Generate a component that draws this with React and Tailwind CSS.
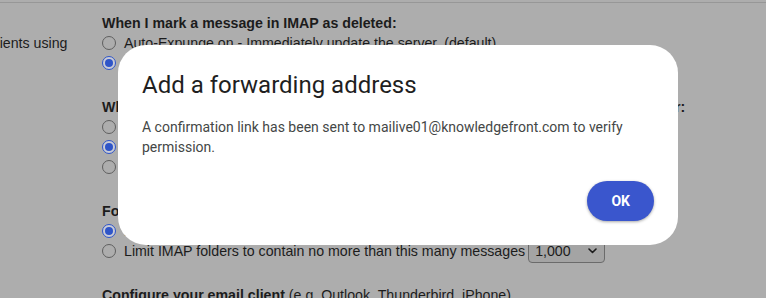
import React from "react";

function Radio({ checked }) {
  if (checked) {
    return (
      <span className="flex h-[14px] w-[14px] shrink-0 items-center justify-center rounded-full border-[1.5px] border-[#2f55c8] bg-[#c9cbd6]">
        <span className="h-[8px] w-[8px] rounded-full bg-[#2f55c8]" />
      </span>
    );
  }
  return (
    <span className="h-[14px] w-[14px] shrink-0 rounded-full border border-[#5f5f5f]" />
  );
}

function Option({ checked, children }) {
  return (
    <div className="flex h-5 items-center gap-2 whitespace-nowrap">
      <Radio checked={checked} />
      {children}
    </div>
  );
}

function Group({ title, children }) {
  return (
    <div className="mb-6">
      <div className="whitespace-nowrap font-bold">{title}</div>
      {children}
    </div>
  );
}

export default function App() {
  return (
    <div className="relative h-[298px] w-[766px] overflow-hidden bg-[#adadad] font-['Liberation_Sans',Arial,sans-serif] text-[14.2px] leading-5 text-[#1c1c1c]">
      <div className="mt-[2px] h-px bg-[#979797]" />

      {/* settings page behind the dialog, scrolled a little to the right */}
      <div className="-ml-[173px] mt-[10px] flex gap-[30px]">
        <div className="w-[245px] shrink-0">
          <div className="font-bold">IMAP access:</div>
          <div>(access Gmail from other clients using IMAP)</div>
        </div>

        <div>
          <Group title="When I mark a message in IMAP as deleted:">
            <Option>Auto-Expunge on - Immediately update the server. (default)</Option>
            <Option checked>Auto-Expunge off - Wait for the client to update the server.</Option>
          </Group>

          <Group title="When a message is marked as deleted and expunged from the last visible IMAP folder:">
            <Option>Archive the message (default)</Option>
            <Option checked>Move the message to the Trash</Option>
            <Option>Immediately delete the message forever</Option>
          </Group>

          <Group title="Folder size limits">
            <Option checked>Do not limit the number of messages in an IMAP folder (default)</Option>
            <Option>
              Limit IMAP folders to contain no more than this many messages
              <div className="-ml-[5px] flex h-[23px] w-[77px] items-center justify-between rounded-[4px] border border-[#6b6b6b] bg-[#a4a4a4] pl-[6px] pr-[7px]">
                <span>1,000</span>
                <svg width="9" height="6" viewBox="0 0 9 6" fill="none">
                  <path d="M1 1l3.5 3.5L8 1" stroke="#1c1c1c" strokeWidth="1.6" strokeLinecap="round" strokeLinejoin="round" />
                </svg>
              </div>
            </Option>
          </Group>

          <div className="whitespace-nowrap">
            <span className="font-bold">Configure your email client</span> (e.g. Outlook, Thunderbird, iPhone)
          </div>
        </div>
      </div>

      {/* dialog */}
      <div className="absolute left-[118px] top-[45px] w-[560px] rounded-[28px] bg-white p-6 font-['Roboto',Arial,sans-serif]">
        <h2 className="text-[24px] font-normal leading-8 text-[#1f1f1f]">Add a forwarding address</h2>
        <p className="mt-4 text-sm leading-5 text-[#444746]">
          A confirmation link has been sent to mailive01@knowledgefront.com to verify permission.
        </p>
        <div className="mt-6 flex justify-end">
          <button className="h-10 rounded-full bg-[#3a56cd] px-6 text-sm font-bold text-white shadow-[0_1px_3px_rgba(0,0,0,0.35)]">
            OK
          </button>
        </div>
      </div>
    </div>
  );
}
